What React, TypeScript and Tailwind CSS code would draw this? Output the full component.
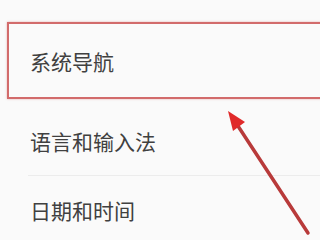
import React from "react";

export default function App() {
  return (
    <div
      className="relative w-[320px] h-[240px] overflow-hidden bg-[#fafafa] text-[#404040]"
      style={{ fontFamily: '"Noto Sans CJK SC", "Noto Sans", sans-serif' }}
    >
      <div className="h-[22px]" />
      <div className="ml-[7px] w-[340px] h-[77px] border-2 border-[#d26b6b] shadow-[0_0_2px_rgba(210,100,100,0.5)] flex items-center pl-[21px] pt-[2px]">
        <span className="text-[21px] leading-none">系统导航</span>
      </div>
      <div className="h-[76px] flex items-center pl-[30px] pt-[9px]">
        <span className="text-[21px] leading-none">语言和输入法</span>
      </div>
      <div className="ml-[28px] h-px bg-[#ececec]" />
      <div className="h-[64px] flex items-center pl-[30px] pt-[5px]">
        <span className="text-[21px] leading-none">日期和时间</span>
      </div>
      <svg
        className="absolute left-0 top-0"
        width="320"
        height="240"
        viewBox="0 0 320 240"
      >
        <line
          x1="308"
          y1="233"
          x2="236"
          y2="123"
          stroke="#b83a3a"
          strokeWidth="3.5"
          strokeLinecap="round"
        />
        <polygon points="228,111 245,122 233,131" fill="#e02a2a" />
      </svg>
    </div>
  );
}
